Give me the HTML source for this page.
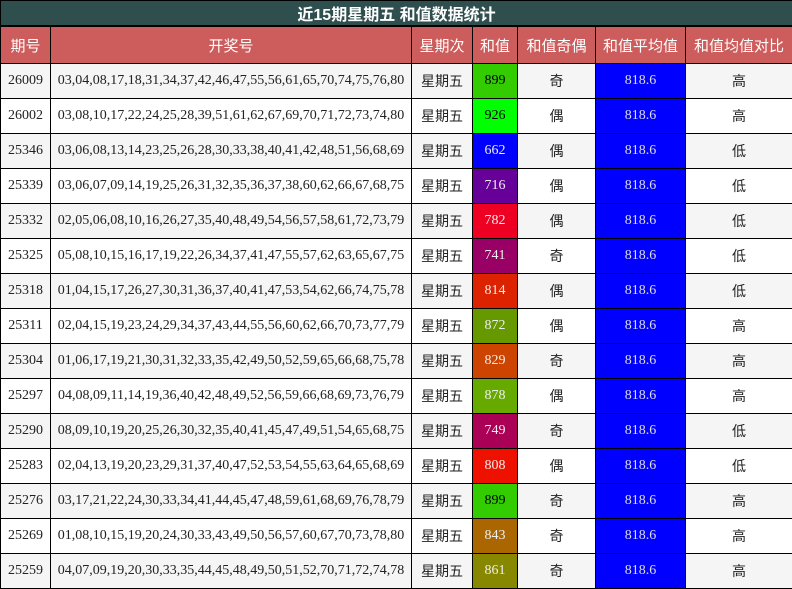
<!DOCTYPE html>
<html><head><meta charset="utf-8"><style>
body{margin:0;width:792px;height:589px;overflow:hidden;background:#fff}
table{border-collapse:collapse;width:792px;table-layout:fixed}
td,th{border:1px solid #000;padding:0;text-align:center;font-family:"Liberation Serif","Noto Sans CJK SC",serif;font-size:14px;color:#222}
.t{background:#2f4f4f;color:#fff;font-weight:bold;font-size:16px;height:24px;border-width:1px 1px 2px 1px;font-family:"Liberation Sans","Noto Sans CJK SC",sans-serif}
th{background:#cd5c5c;color:#fff;font-weight:normal;font-size:15px;height:36px;font-family:"Liberation Sans","Noto Sans CJK SC",sans-serif}
td{height:34px}
tr:nth-child(odd) td{background:#f5f5f5}
tr:nth-child(even) td{background:#fff}
td.a{background:#0000ff!important;color:#ddd}
.c{font-family:"Liberation Sans","Noto Sans CJK SC",sans-serif}
</style></head><body>
<table>
<colgroup><col style="width:50px"><col style="width:361px"><col style="width:61px"><col style="width:45px"><col style="width:78px"><col style="width:90px"><col style="width:107px"></colgroup>
<thead>
<tr><th class="t" colspan="7">近15期星期五 和值数据统计</th></tr>
<tr><th>期号</th><th>开奖号</th><th>星期次</th><th>和值</th><th>和值奇偶</th><th>和值平均值</th><th>和值均值对比</th></tr>
</thead>
<tbody>
<tr><td>26009</td><td>03,04,08,17,18,31,34,37,42,46,47,55,56,61,65,70,74,75,76,80</td><td class="c">星期五</td><td style="background:#33cc00;color:#000">899</td><td class="c">奇</td><td class="a">818.6</td><td class="c">高</td></tr>
<tr><td>26002</td><td>03,08,10,17,22,24,25,28,39,51,61,62,67,69,70,71,72,73,74,80</td><td class="c">星期五</td><td style="background:#00ff00;color:#000">926</td><td class="c">偶</td><td class="a">818.6</td><td class="c">高</td></tr>
<tr><td>25346</td><td>03,06,08,13,14,23,25,26,28,30,33,38,40,41,42,48,51,56,68,69</td><td class="c">星期五</td><td style="background:#0000ff!important;color:#eee">662</td><td class="c">偶</td><td class="a">818.6</td><td class="c">低</td></tr>
<tr><td>25339</td><td>03,06,07,09,14,19,25,26,31,32,35,36,37,38,60,62,66,67,68,75</td><td class="c">星期五</td><td style="background:#660099;color:#eee">716</td><td class="c">偶</td><td class="a">818.6</td><td class="c">低</td></tr>
<tr><td>25332</td><td>02,05,06,08,10,16,26,27,35,40,48,49,54,56,57,58,61,72,73,79</td><td class="c">星期五</td><td style="background:#ee0022;color:#eee">782</td><td class="c">偶</td><td class="a">818.6</td><td class="c">低</td></tr>
<tr><td>25325</td><td>05,08,10,15,16,17,19,22,26,34,37,41,47,55,57,62,63,65,67,75</td><td class="c">星期五</td><td style="background:#990066;color:#eee">741</td><td class="c">奇</td><td class="a">818.6</td><td class="c">低</td></tr>
<tr><td>25318</td><td>01,04,15,17,26,27,30,31,36,37,40,41,47,53,54,62,66,74,75,78</td><td class="c">星期五</td><td style="background:#dd2200;color:#eee">814</td><td class="c">偶</td><td class="a">818.6</td><td class="c">低</td></tr>
<tr><td>25311</td><td>02,04,15,19,23,24,29,34,37,43,44,55,56,60,62,66,70,73,77,79</td><td class="c">星期五</td><td style="background:#669900;color:#eee">872</td><td class="c">偶</td><td class="a">818.6</td><td class="c">高</td></tr>
<tr><td>25304</td><td>01,06,17,19,21,30,31,32,33,35,42,49,50,52,59,65,66,68,75,78</td><td class="c">星期五</td><td style="background:#cc4400;color:#eee">829</td><td class="c">奇</td><td class="a">818.6</td><td class="c">高</td></tr>
<tr><td>25297</td><td>04,08,09,11,14,19,36,40,42,48,49,52,56,59,66,68,69,73,76,79</td><td class="c">星期五</td><td style="background:#66aa00;color:#eee">878</td><td class="c">偶</td><td class="a">818.6</td><td class="c">高</td></tr>
<tr><td>25290</td><td>08,09,10,19,20,25,26,30,32,35,40,41,45,47,49,51,54,65,68,75</td><td class="c">星期五</td><td style="background:#aa0055;color:#eee">749</td><td class="c">奇</td><td class="a">818.6</td><td class="c">低</td></tr>
<tr><td>25283</td><td>02,04,13,19,20,23,29,31,37,40,47,52,53,54,55,63,64,65,68,69</td><td class="c">星期五</td><td style="background:#ee1100;color:#eee">808</td><td class="c">偶</td><td class="a">818.6</td><td class="c">低</td></tr>
<tr><td>25276</td><td>03,17,21,22,24,30,33,34,41,44,45,47,48,59,61,68,69,76,78,79</td><td class="c">星期五</td><td style="background:#33cc00;color:#000">899</td><td class="c">奇</td><td class="a">818.6</td><td class="c">高</td></tr>
<tr><td>25269</td><td>01,08,10,15,19,20,24,30,33,43,49,50,56,57,60,67,70,73,78,80</td><td class="c">星期五</td><td style="background:#aa6600;color:#eee">843</td><td class="c">奇</td><td class="a">818.6</td><td class="c">高</td></tr>
<tr><td>25259</td><td>04,07,09,19,20,30,33,35,44,45,48,49,50,51,52,70,71,72,74,78</td><td class="c">星期五</td><td style="background:#888800;color:#eee">861</td><td class="c">奇</td><td class="a">818.6</td><td class="c">高</td></tr>
</tbody></table>
</body></html>
